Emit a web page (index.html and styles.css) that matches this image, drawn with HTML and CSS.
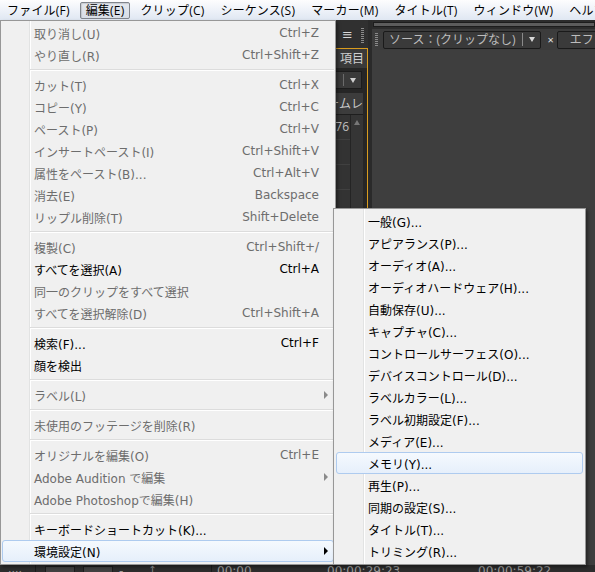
FILE: index.html
```html
<!DOCTYPE html>
<html lang="ja">
<head>
    <meta charset="UTF-8">
    <meta name="viewport" content="width=device-width, initial-scale=1.0">
    <title>編集メニュー</title>
    <link rel="stylesheet" href="styles.css">
</head>
<body>
    <div class="menubar">
        <span class="bar-item">ファイル(F)</span>
        <span class="bar-item pressed">編集(E)</span>
        <span class="bar-item">クリップ(C)</span>
        <span class="bar-item">シーケンス(S)</span>
        <span class="bar-item">マーカー(M)</span>
        <span class="bar-item">タイトル(T)</span>
        <span class="bar-item">ウィンドウ(W)</span>
        <span class="bar-item">ヘルプ(H)</span>
    </div>

    <div class="workspace">
        <div class="panels">
            <div class="project">
                <div class="project-head">
                    <span class="panel-menu">≡</span>
                    <span class="grip"></span>
                </div>
                <div class="project-body">
                    <div class="count">項目</div>
                    <div class="dropdown"><span class="dd-sep"></span><span class="tri-down"></span></div>
                    <div class="col-head">フレームレ</div>
                    <div class="list">
                        <div class="list-col">
                            <div class="cell">29.976</div>
                            <div class="cell"></div>
                            <div class="cell"></div>
                        </div>
                        <div class="scrollbar"><span class="tri-up"></span></div>
                    </div>
                </div>
            </div>
            <div class="source">
                <div class="source-top"></div>
                <div class="tabs">
                    <span class="grip tab-grip"></span>
                    <span class="tab">ソース：(クリップなし)<span class="tab-sep"></span><span class="tri-down light"></span></span>
                    <span class="close">×</span>
                    <span class="tab tab2">エフェクトコントロール</span>
                </div>
                <div class="source-body"></div>
            </div>
        </div>
        <div class="timeline">
            <span class="tl-dots">····</span>
            <span class="tl-line"></span>
            <span class="tl-btn"></span>
            <span class="tl-btn"></span>
            <span class="tl-glyph">-</span>
            <span class="tl-glyph wide">⤴</span>
            <span class="tl-line"></span>
            <span class="tl-time first">00:00</span>
            <span class="tl-time">00:00:29:23</span>
            <span class="tl-time">00:00:59:22</span>
        </div>
    </div>

    <div class="menu main-menu">
        <div class="item off"><span class="label">取り消し(U)</span><span class="key">Ctrl+Z</span><span class="sub"></span></div>
        <div class="item off"><span class="label">やり直し(R)</span><span class="key">Ctrl+Shift+Z</span><span class="sub"></span></div>
        <div class="sep"></div>
        <div class="item off"><span class="label">カット(T)</span><span class="key">Ctrl+X</span><span class="sub"></span></div>
        <div class="item off"><span class="label">コピー(Y)</span><span class="key">Ctrl+C</span><span class="sub"></span></div>
        <div class="item off"><span class="label">ペースト(P)</span><span class="key">Ctrl+V</span><span class="sub"></span></div>
        <div class="item off"><span class="label">インサートペースト(I)</span><span class="key">Ctrl+Shift+V</span><span class="sub"></span></div>
        <div class="item off"><span class="label">属性をペースト(B)...</span><span class="key">Ctrl+Alt+V</span><span class="sub"></span></div>
        <div class="item off"><span class="label">消去(E)</span><span class="key">Backspace</span><span class="sub"></span></div>
        <div class="item off"><span class="label">リップル削除(T)</span><span class="key">Shift+Delete</span><span class="sub"></span></div>
        <div class="sep"></div>
        <div class="item off"><span class="label">複製(C)</span><span class="key">Ctrl+Shift+/</span><span class="sub"></span></div>
        <div class="item"><span class="label">すべてを選択(A)</span><span class="key">Ctrl+A</span><span class="sub"></span></div>
        <div class="item off"><span class="label">同一のクリップをすべて選択</span><span class="key"></span><span class="sub"></span></div>
        <div class="item off"><span class="label">すべてを選択解除(D)</span><span class="key">Ctrl+Shift+A</span><span class="sub"></span></div>
        <div class="sep"></div>
        <div class="item"><span class="label">検索(F)...</span><span class="key">Ctrl+F</span><span class="sub"></span></div>
        <div class="item"><span class="label">顔を検出</span><span class="key"></span><span class="sub"></span></div>
        <div class="sep"></div>
        <div class="item off"><span class="label">ラベル(L)</span><span class="key"></span><span class="sub"><span class="arrow"></span></span></div>
        <div class="sep"></div>
        <div class="item off"><span class="label">未使用のフッテージを削除(R)</span><span class="key"></span><span class="sub"></span></div>
        <div class="sep"></div>
        <div class="item off"><span class="label">オリジナルを編集(O)</span><span class="key">Ctrl+E</span><span class="sub"></span></div>
        <div class="item off"><span class="label">Adobe Audition で編集</span><span class="key"></span><span class="sub"><span class="arrow"></span></span></div>
        <div class="item off"><span class="label">Adobe Photoshopで編集(H)</span><span class="key"></span><span class="sub"></span></div>
        <div class="sep"></div>
        <div class="item"><span class="label">キーボードショートカット(K)...</span><span class="key"></span><span class="sub"></span></div>
        <div class="item hover"><span class="label">環境設定(N)</span><span class="key"></span><span class="sub"><span class="arrow"></span></span></div>
    </div>

    <div class="menu sub-menu">
        <div class="item"><span class="label">一般(G)...</span></div>
        <div class="item"><span class="label">アピアランス(P)...</span></div>
        <div class="item"><span class="label">オーディオ(A)...</span></div>
        <div class="item"><span class="label">オーディオハードウェア(H)...</span></div>
        <div class="item"><span class="label">自動保存(U)...</span></div>
        <div class="item"><span class="label">キャプチャ(C)...</span></div>
        <div class="item"><span class="label">コントロールサーフェス(O)...</span></div>
        <div class="item"><span class="label">デバイスコントロール(D)...</span></div>
        <div class="item"><span class="label">ラベルカラー(L)...</span></div>
        <div class="item"><span class="label">ラベル初期設定(F)...</span></div>
        <div class="item"><span class="label">メディア(E)...</span></div>
        <div class="item hover"><span class="label">メモリ(Y)...</span></div>
        <div class="item"><span class="label">再生(P)...</span></div>
        <div class="item"><span class="label">同期の設定(S)...</span></div>
        <div class="item"><span class="label">タイトル(T)...</span></div>
        <div class="item"><span class="label">トリミング(R)...</span></div>
    </div>
</body>
</html>
```

FILE: styles.css
```css
body{
    margin: 0;
    width: 595px;
    height: 572px;
    overflow: hidden;
    position: relative;
    background-color: #2a2a2a;
    font-family: "Open Sans", "Noto Sans CJK JP", sans-serif;
    font-size: 12px;
}

/* menu bar */
.menubar{
    height: 20px;
    display: flex;
    align-items: center;
    background: linear-gradient(#fdfdfe, #edf1f8 55%, #dfe7f2);
    white-space: nowrap;
    letter-spacing: 0.2px;
    overflow: hidden;
}
.bar-item{
    height: 15px;
    line-height: 15px;
    padding: 0 5px;
    margin: 0 2px;
    border: 1px solid transparent;
    border-radius: 2px;
    color: #000;
    flex-shrink: 0;
}
.bar-item:first-child{
    margin-left: 1px;
}
.pressed{
    border-color: #80858c;
    background: linear-gradient(#e4e8ee, #d8dee6);
    box-shadow: inset 1px 1px 1px rgba(0,0,0,0.12);
}

/* app behind the menus */
.workspace{
    display: flex;
    flex-direction: column;
}
.panels{
    height: 545px;
    display: flex;
    gap: 4px;
}
.project{
    width: 368px;
    flex-shrink: 0;
    display: flex;
    flex-direction: column;
}
.project-head{
    height: 28px;
    display: flex;
    justify-content: flex-end;
    align-items: center;
    gap: 8px;
    padding-right: 4px;
    padding-top: 2px;
    box-sizing: border-box;
    background-color: #303030;
}
.panel-menu{
    color: #d8d8d8;
    font-family: "DejaVu Sans", sans-serif;
    font-size: 13px;
    line-height: 14px;
}
.grip{
    width: 3px;
    height: 15px;
    background: repeating-linear-gradient(#8a8a8a 0 1px, transparent 1px 2px);
}
.project-body{
    flex: 1;
    border-top: 1px solid #d99c1e;
    border-right: 1px solid #d99c1e;
    background-color: #262626;
    display: flex;
    flex-direction: column;
    align-items: flex-end;
}
.count{
    height: 19px;
    line-height: 19px;
    color: #cfcfcf;
    width: 100%;
    text-align: right;
    background-color: #3a3a3a;
    padding-right: 3px;
    box-sizing: border-box;
}
.dropdown{
    margin-top: 3px;
    height: 16px;
    width: 140px;
    margin-right: 5px;
    border: 1px solid #1c1c1c;
    background-color: #3a3a3a;
    display: flex;
    align-items: center;
    justify-content: flex-end;
    gap: 6px;
    padding-right: 5px;
}
.dd-sep{
    width: 1px;
    height: 12px;
    background-color: #6a6a6a;
}
.tri-down{
    width: 0;
    height: 0;
    border-left: 3px solid transparent;
    border-right: 3px solid transparent;
    border-top: 5px solid #cfcfcf;
}
.tri-down.light{
    border-top-color: #d8d8d8;
}
.col-head{
    margin-top: 4px;
    height: 21px;
    line-height: 21px;
    width: 200px;
    margin-right: 4px;
    text-align: right;
    color: #c8c8c8;
    background-color: #3c3c3c;
    border-bottom: 1px solid #1e1e1e;
    overflow: hidden;
    white-space: nowrap;
}
.list{
    flex: 1;
    display: flex;
    margin-right: 4px;
    background-color: #333;
}
.list-col{
    width: 80px;
    border-right: 1px solid #242424;
}
.cell{
    height: 24px;
    line-height: 24px;
    text-align: right;
    color: #c0c0c0;
    padding-right: 1px;
    border-bottom: 1px solid #404040;
}
.scrollbar{
    width: 12px;
    display: flex;
    justify-content: center;
    padding-top: 5px;
    background-color: #353535;
}
.tri-up{
    width: 0;
    height: 0;
    border-left: 3px solid transparent;
    border-right: 3px solid transparent;
    border-bottom: 5px solid #777;
}
.source{
    flex: 1;
    min-width: 0;
    display: flex;
    flex-direction: column;
    background-color: #2c2c2c;
}
.source-top{
    height: 3px;
    margin: 2px 0 0 1px;
    background-color: #5c5c5c;
    border: 1px solid #1c1c1c;
}
.tabs{
    height: 21px;
    display: flex;
    align-items: center;
    background-color: #3c3c3c;
    margin-top: 2px;
    white-space: nowrap;
    overflow: hidden;
}
.tab-grip{
    margin-left: 3px;
    height: 14px;
    flex-shrink: 0;
}
.tab{
    margin-left: 5px;
    height: 16px;
    line-height: 16px;
    padding: 0 5px;
    border: 1px solid #1a1a1a;
    border-radius: 2px;
    background-color: #3a3a3a;
    color: #bdbdbd;
    display: flex;
    align-items: center;
    flex-shrink: 0;
}
.tab-sep{
    width: 1px;
    height: 13px;
    margin: 0 6px 0 7px;
    background-color: #8a8a8a;
}
.close{
    margin-left: 6px;
    color: #e0e0e0;
    font-size: 11px;
    flex-shrink: 0;
}
.tab2{
    margin-left: 3px;
    padding-left: 12px;
}
.source-body{
    flex: 1;
    background-color: #3e3e3e;
}
.timeline{
    height: 20px;
    display: flex;
    align-items: flex-start;
    background-color: #2c2c2c;
    color: #9a9a9a;
    font-family: "DejaVu Sans", sans-serif;
    font-size: 12px;
    line-height: 13px;
    white-space: nowrap;
    overflow: hidden;
}
.timeline > span{
    flex-shrink: 0;
}
.tl-dots{
    margin-left: 8px;
    width: 27px;
    font-size: 11px;
}
.tl-line{
    width: 1px;
    height: 20px;
    background-color: #1b1b1b;
}
.tl-btn{
    width: 28px;
    height: 14px;
    margin-top: 1px;
    margin-left: 9px;
    border: 1px solid #1c1c1c;
    background-color: #404040;
}
.tl-btn + .tl-btn{
    margin-left: 8px;
}
.tl-glyph{
    margin-left: 6px;
    width: 30px;
}
.tl-glyph.wide{
    margin-left: 0;
    width: 62px;
}
.tl-time{
    width: 151px;
}
.tl-time.first{
    margin-left: 5px;
    width: 110px;
}

/* dropdown menus */
.menu{
    position: absolute;
    box-sizing: border-box;
    border: 1px solid #979797;
    box-shadow: 2px 2px 3px rgba(0,0,0,0.4);
    font-family: "DejaVu Sans", "Noto Sans CJK JP", sans-serif;
}
.main-menu{
    left: 0;
    top: 20px;
    width: 336px;
    padding: 1px 1px 2px 1px;
    background: linear-gradient(to right, #f0f0f0 28px, #e2e3e3 28px, #e2e3e3 29px, #fff 29px, #fff 30px, #f0f0f0 30px);
}
.sub-menu{
    left: 333px;
    top: 208px;
    width: 253px;
    padding: 1px 2px 2px 2px;
    background: linear-gradient(to right, #f0f0f0 29px, #e2e3e3 29px, #e2e3e3 30px, #fff 30px, #fff 31px, #f0f0f0 31px);
}
.item{
    height: 22px;
    display: flex;
    align-items: center;
    padding-left: 32px;
    box-sizing: border-box;
    color: #000;
    white-space: nowrap;
}
.item.off{
    color: #6d6d6d;
}
.label{
    flex: 1;
}
.key{
    text-align: right;
}
.sub{
    width: 15px;
    display: flex;
    align-items: center;
}
.arrow{
    margin-left: 5px;
    width: 0;
    height: 0;
    border-top: 4px solid transparent;
    border-bottom: 4px solid transparent;
    border-left: 4px solid #000;
}
.item.off .arrow{
    border-left-color: #8a8a8a;
}
.item.hover{
    padding-left: 31px;
    border: 1px solid #aecbef;
    border-radius: 3px;
    background: linear-gradient(#f5f9fe, #e6effb);
}
.item.hover .sub{
    width: 14px;
}
.sep{
    height: 0;
    margin: 3px 0 3px 28px;
    border-top: 1px solid #dcdcdc;
    border-bottom: 1px solid #fff;
}
.sub-menu .sep{
    margin-left: 29px;
}
```
